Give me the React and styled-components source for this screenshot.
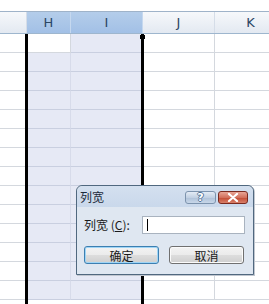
import styled, { createGlobalStyle } from 'styled-components';

const GlobalStyle = createGlobalStyle`
  html, body {
    margin: 0;
    padding: 0;
    background: #ffffff;
    overflow: hidden;
  }
  body {
    font-family: "Noto Sans CJK SC", "Liberation Sans", sans-serif;
  }
`;

const columns = [
  { key: 'G', label: '', width: 27 },
  { key: 'H', label: 'H', width: 44, selected: true },
  { key: 'I', label: 'I', width: 72, selected: true },
  { key: 'J', label: 'J', width: 72 },
  { key: 'K', label: 'K', width: 72 },
];

const ROWS = 14;

const App = () => {
  return (
    <Page>
      <GlobalStyle />
      <TopStrip />
      <HeaderRow>
        {columns.map((col) => (
          <ColHeader key={col.key} $width={col.width} $selected={col.selected}>
            {col.label}
          </ColHeader>
        ))}
      </HeaderRow>
      {Array.from({ length: ROWS }).map((_, r) => (
        <Row key={'row' + r}>
          {columns.map((col) => (
            <Cell
              key={col.key + r}
              $width={col.width}
              $selected={col.selected && !(r === 0 && col.key === 'H')}
              $inner={col.key === 'H'}
            />
          ))}
        </Row>
      ))}
      <SelectionFrame>
        <FillHandle />
      </SelectionFrame>
      <Dialog>
        <TitleBar>
          <Title>列宽</Title>
          <CaptionButtons>
            <HelpButton>?</HelpButton>
            <CloseButton>
              <svg width="12" height="9" viewBox="0 0 12 9">
                <path
                  d="M2 1 L10 8 M10 1 L2 8"
                  stroke="#ffffff"
                  strokeWidth="2.2"
                  strokeLinecap="round"
                />
              </svg>
            </CloseButton>
          </CaptionButtons>
        </TitleBar>
        <Body>
          <FieldRow>
            <Label>
              列宽 (<u>C</u>):
            </Label>
            <Input>
              <Caret />
            </Input>
          </FieldRow>
          <ButtonRow>
            <PushButton $default>确定</PushButton>
            <PushButton>取消</PushButton>
          </ButtonRow>
        </Body>
      </Dialog>
    </Page>
  );
};

const Page = styled.div`
  position: relative;
  width: 269px;
  height: 304px;
  overflow: hidden;
  background: #ffffff;
`;

const TopStrip = styled.div`
  height: 11px;
  background: #ffffff;
`;

const HeaderRow = styled.div`
  display: flex;
  height: 21px;
  border-top: 1px solid #9fb3c9;
  border-bottom: 1px solid #9eb6ce;
`;

const ColHeader = styled.div`
  flex: 0 0 ${(p) => p.$width}px;
  box-sizing: border-box;
  display: flex;
  align-items: center;
  justify-content: center;
  border-right: 1px solid ${(p) => (p.$selected ? '#c5d8ef' : '#d5dde8')};
  background: ${(p) =>
    p.$selected
      ? 'linear-gradient(#b4cdea, #a2c0e6)'
      : 'linear-gradient(#f6f8fb, #e3e9f1)'};
  color: #2a4664;
  font-family: "DejaVu Sans", sans-serif;
  font-size: 13px;
`;

const Row = styled.div`
  display: flex;
  height: 19px;
`;

const Cell = styled.div`
  flex: 0 0 ${(p) => p.$width}px;
  box-sizing: border-box;
  border-right: 1px solid ${(p) => (p.$selected && p.$inner ? '#d7dbea' : '#d4d8de')};
  border-bottom: 1px solid ${(p) => (p.$selected ? '#c9cfe0' : '#d4d8de')};
  background: ${(p) => (p.$selected ? '#e6e9f5' : '#ffffff')};
`;

const SelectionFrame = styled.div`
  position: absolute;
  left: 25px;
  top: 34px;
  width: 113px;
  bottom: 0;
  border-left: 3px solid #000000;
  border-right: 3px solid #000000;
`;

const FillHandle = styled.div`
  position: absolute;
  right: -4px;
  top: 1px;
  width: 5px;
  height: 4px;
  background: #000000;
`;

const Dialog = styled.div`
  position: absolute;
  left: 76px;
  top: 185px;
  width: 176px;
  height: 88px;
  display: flex;
  flex-direction: column;
  border: 1px solid #50687f;
  border-radius: 6px 6px 0 0;
  background: #dfe7f1;
  box-shadow: 1px 1px 0 #c0c6cf;
`;

const TitleBar = styled.div`
  display: flex;
  align-items: center;
  justify-content: space-between;
  height: 21px;
  padding: 0 5px 0 3px;
  background: linear-gradient(#d4e0ef, #c9d8eb);
  border-radius: 6px 6px 0 0;
`;

const Title = styled.span`
  font-size: 12px;
  color: #1c2a3a;
  line-height: 1;
`;

const CaptionButtons = styled.div`
  display: flex;
  gap: 2px;
  margin-top: 2px;
`;

const CaptionButton = styled.div`
  box-sizing: border-box;
  height: 13px;
  display: flex;
  align-items: center;
  justify-content: center;
  border-radius: 3px;
`;

const HelpButton = styled(CaptionButton)`
  width: 31px;
  border: 1px solid #7c93ad;
  background: linear-gradient(#e3ebf5 0%, #c2d1e3 50%, #aec1d8 51%, #c8d7e9 100%);
  color: #ffffff;
  font-family: "DejaVu Sans", sans-serif;
  font-weight: bold;
  font-size: 11px;
  line-height: 11px;
  text-shadow: 1px 0 0 #56769a, -1px 0 0 #56769a, 0 1px 0 #56769a, 0 -1px 0 #56769a;
`;

const CloseButton = styled(CaptionButton)`
  width: 30px;
  border: 1px solid #7a2a20;
  background: linear-gradient(#e8a596 0%, #d2705c 50%, #c14a33 51%, #d9806a 100%);
`;

const Body = styled.div`
  flex: 1;
  display: flex;
  flex-direction: column;
  padding: 9px 8px 0 7px;
  gap: 12px;
`;

const FieldRow = styled.div`
  display: flex;
  align-items: center;
  justify-content: space-between;
`;

const Label = styled.span`
  font-size: 12px;
  color: #1a1a1a;
  line-height: 1;
  u {
    text-decoration: underline;
  }
`;

const Input = styled.div`
  box-sizing: border-box;
  width: 103px;
  height: 18px;
  background: #ffffff;
  border: 1px solid #a9b3bf;
  display: flex;
  align-items: center;
  padding-left: 4px;
`;

const Caret = styled.div`
  width: 1px;
  height: 12px;
  background: #000000;
`;

const ButtonRow = styled.div`
  display: flex;
  justify-content: space-between;
  padding-right: 1px;
`;

const PushButton = styled.div`
  box-sizing: border-box;
  width: 75px;
  height: 18px;
  display: flex;
  align-items: center;
  justify-content: center;
  font-size: 12px;
  color: #1a1a1a;
  border-radius: 3px;
  border: 1px solid ${(p) => (p.$default ? '#3c7fb1' : '#707070')};
  box-shadow: ${(p) => (p.$default ? 'inset 0 0 0 1px #9fd5f6' : 'inset 0 0 0 1px #fbfbfb')};
  background: linear-gradient(#f3f3f3 0%, #ebebeb 50%, #dddddd 51%, #cfcfcf 100%);
`;

export default App;
